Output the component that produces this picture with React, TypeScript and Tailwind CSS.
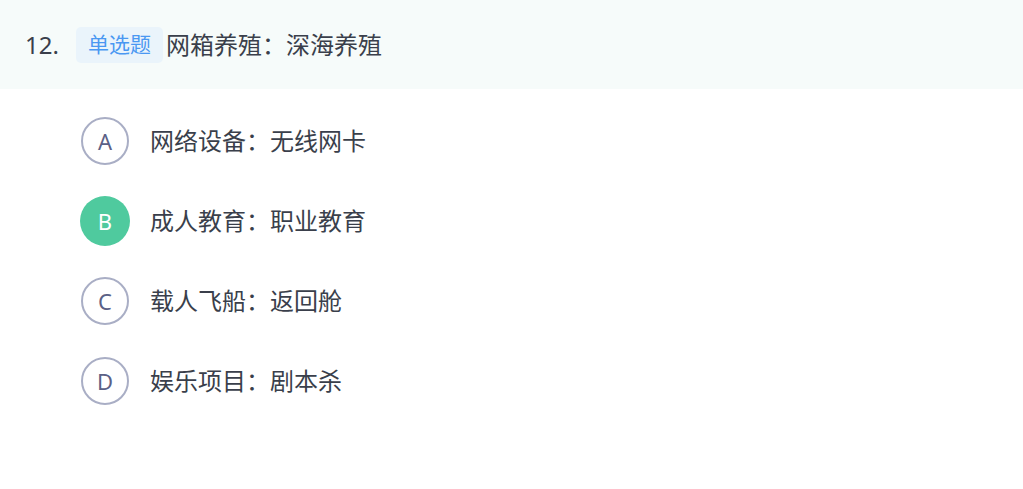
const options = [
  { key: "A", text: "网络设备：无线网卡", picked: false },
  { key: "B", text: "成人教育：职业教育", picked: true },
  { key: "C", text: "载人飞船：返回舱", picked: false },
  { key: "D", text: "娱乐项目：剧本杀", picked: false },
];

export default function App() {
  return (
    <div
      className="min-h-screen w-full bg-white text-[#3a3f4b]"
      style={{ fontFamily: '"Noto Sans", "Noto Sans CJK SC", sans-serif' }}
    >
      <div className="flex h-[89px] items-center bg-[#f6fbfa] pl-[25px]">
        <span className="text-[24px] leading-none">12.</span>
        <span className="ml-[17px] flex h-[36px] items-center rounded-[5px] bg-[#eaf4fb] px-[12px] text-[21px] text-[#4a98f2]">
          单选题
        </span>
        <span className="ml-[3px] text-[24px]">网箱养殖：深海养殖</span>
      </div>

      <div className="pt-[12px]">
        {options.map((o) => (
          <div key={o.key} className="flex h-[80px] items-center pl-[81px]">
            {o.picked ? (
              <span className="-ml-[1px] flex h-[50px] w-[50px] items-center justify-center rounded-full bg-[#4fca9e] text-[22px] text-white">
                {o.key}
              </span>
            ) : (
              <span className="flex h-[48px] w-[48px] items-center justify-center rounded-full border-2 border-[#a9aec5] text-[22px] text-[#5b6186]">
                {o.key}
              </span>
            )}
            <span className={`${o.picked ? "ml-[20px]" : "ml-[21px]"} text-[24px]`}>{o.text}</span>
          </div>
        ))}
      </div>
    </div>
  );
}
